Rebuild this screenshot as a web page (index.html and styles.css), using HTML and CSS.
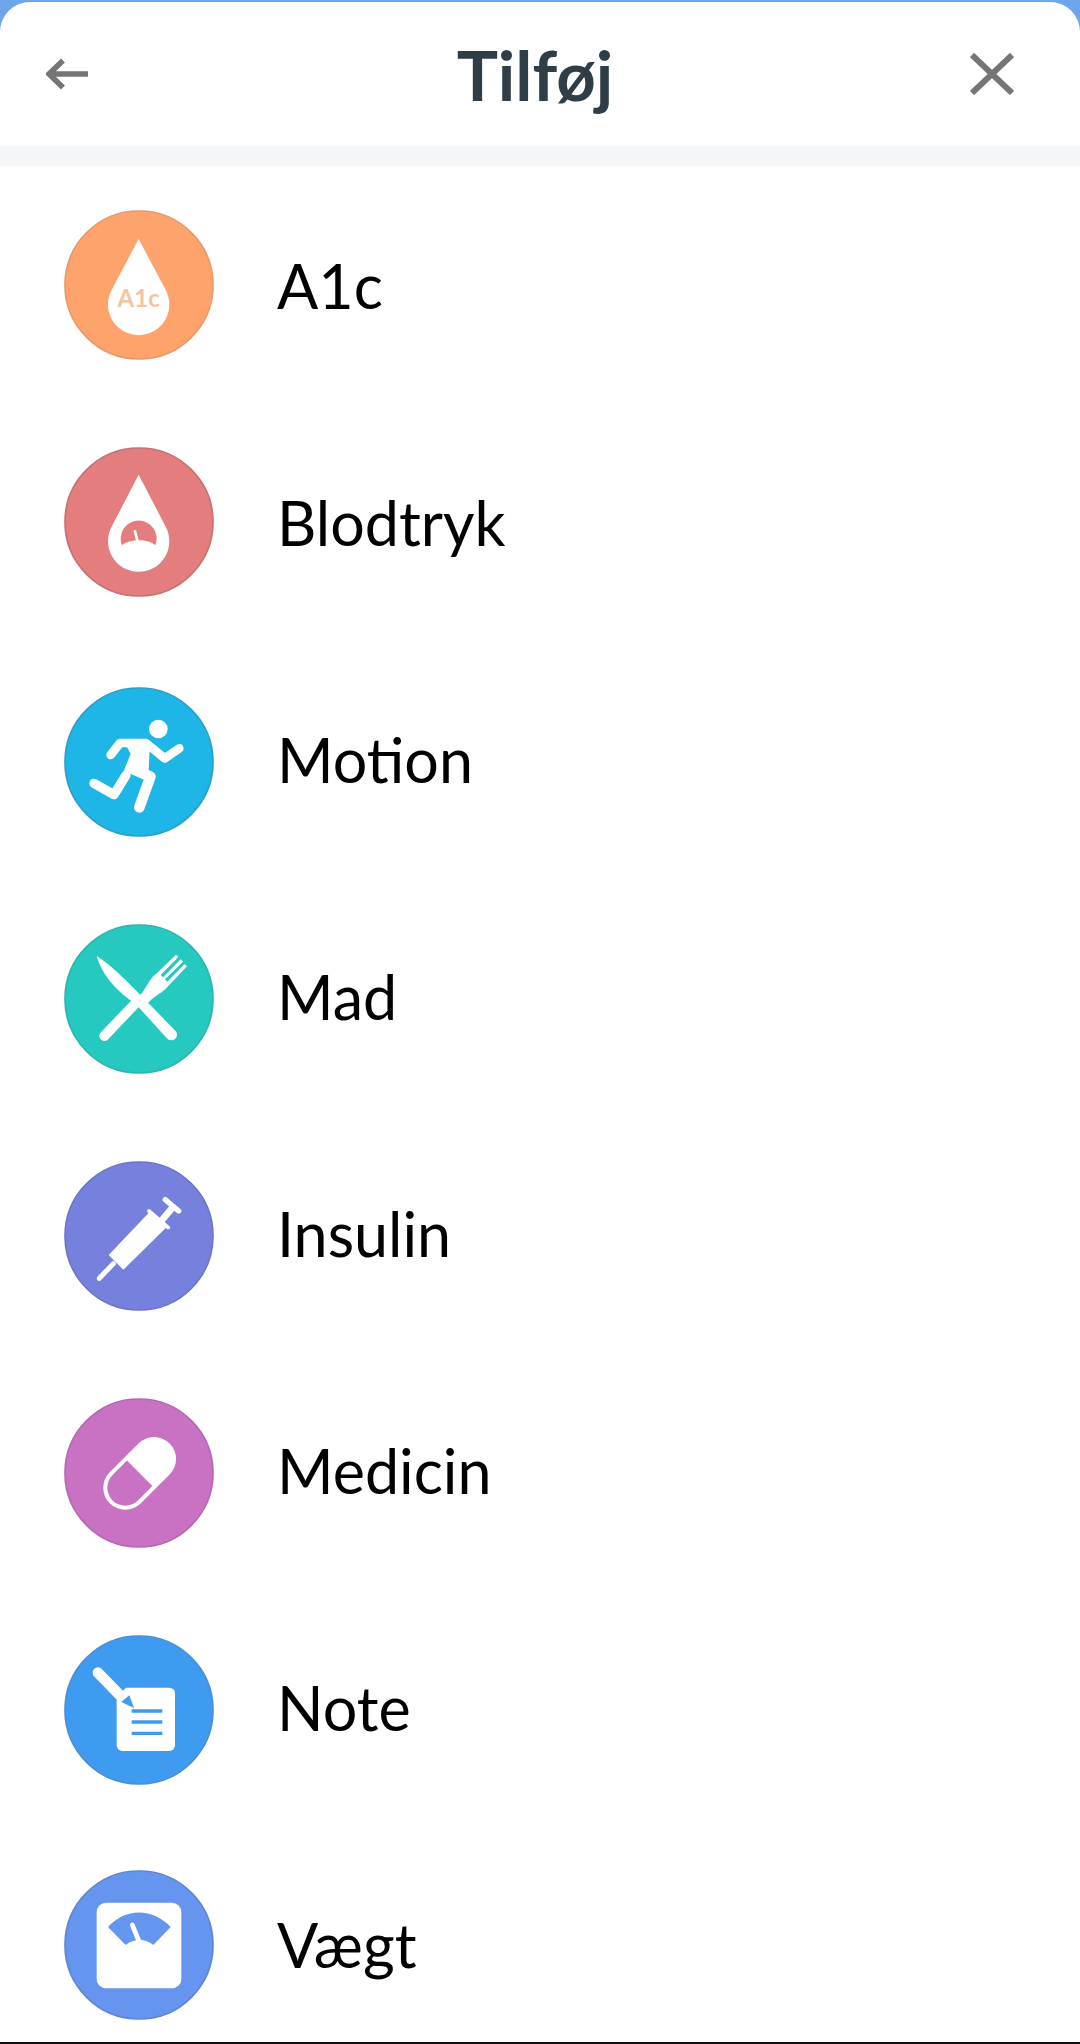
FILE: index.html
```html
<!DOCTYPE html>
<html lang="da">
<head>
    <meta charset="UTF-8">
    <meta name="viewport" content="width=device-width, initial-scale=1.0">
    <title>Tilføj</title>
    <link rel="stylesheet" href="styles.css">
</head>
<body>
    <div class="sheet">
        <!-- header -->
        <header class="top-bar">
            <svg class="back-icon" viewBox="0 0 44 32"><path d="M42 16H4M17 2.500 3 16l14 13.500"/></svg>
            <h1 class="title">Tilføj</h1>
            <svg class="close-icon" viewBox="0 0 44 42"><path d="M2 2l40 38M42 2 2 40"/></svg>
        </header>
        <div class="divider"></div>

        <!-- list -->
        <ul class="add-list">
            <li class="add-row">
                <svg class="add-icon" viewBox="39 27 456 456">
                    <circle class="disc disc-a1c" cx="267" cy="255" r="222"/>
                    <path class="white" d="M266 117 186 268A92 92 0 1 0 346 268Z"/>
                    <text class="drop-text" x="266" y="321">A1c</text>
                </svg>
                <span class="add-label">A1c</span>
            </li>
            <li class="add-row">
                <svg class="add-icon" viewBox="39 34 456 456">
                    <circle class="disc disc-pressure" cx="267" cy="262" r="222"/>
                    <path class="white" d="M266 120 186 274A92 92 0 1 0 346 274Z"/>
                    <path class="fill-pressure" d="M216 332A54 54 0 1 1 316 332C295 312 240 312 216 332Z"/>
                    <path class="line-white" stroke-width="8" d="M255 290l8 30"/>
                </svg>
                <span class="add-label">Blodtryk</span>
            </li>
            <li class="add-row">
                <svg class="add-icon" viewBox="39 37 456 456">
                    <circle class="disc disc-motion" cx="267" cy="265" r="222"/>
                    <circle class="white" cx="325" cy="166" r="28"/>
                    <path class="line-white" stroke-width="26" d="M182 244l28-36h78l56 46 44-30"/>
                    <path class="white" d="M222 205H300L296 292 218 300 242 240Z"/>
                    <path class="line-white" stroke-width="32" d="M245 285l56 24-33 92"/>
                    <path class="line-white" stroke-width="28" d="M228 305l-36 58-60-34"/>
                </svg>
                <span class="add-label">Motion</span>
            </li>
            <li class="add-row">
                <svg class="add-icon" viewBox="39 37 456 456">
                    <circle class="disc disc-food" cx="267" cy="265" r="222"/>
                    <path class="white" d="M140 136C180 160 230 210 290 272L376 360A16 16 0 0 1 352 384L268 292 240 268C195 235 155 190 140 136Z"/>
                    <path class="line-white" stroke-width="30" d="M163 376 262 272"/>
                    <path class="white" d="M248 268C285 255 290 210 318 190L378 132 385 139 332 193 339 200 392 146 399 153 345 206 352 213 404 160 411 167 357 224C335 250 310 255 285 288Z"/>
                </svg>
                <span class="add-label">Mad</span>
            </li>
            <li class="add-row">
                <svg class="add-icon" viewBox="39 37 456 456">
                    <circle class="disc disc-insulin" cx="267" cy="265" r="222"/>
                    <path class="line-white" stroke-width="15" d="M148 392l42-44"/>
                    <path class="white" d="M176 322 298 194 348 240 220 366Z"/>
                    <path class="line-white" stroke-width="11" d="M297 190 355 240"/>
                    <path class="line-white" stroke-width="20" d="M332 222l32-38"/>
                    <path class="line-white" stroke-width="16" d="M346 156l40 34"/>
                </svg>
                <span class="add-label">Insulin</span>
            </li>
            <li class="add-row">
                <svg class="add-icon" viewBox="39 34 456 456">
                    <circle class="disc disc-medicine" cx="267" cy="262" r="222"/>
                    <g transform="translate(269 263) rotate(-45)">
                        <rect class="white" x="-127" y="-66" width="254" height="132" rx="66"/>
                        <path class="fill-medicine" d="M0 -54H-61A54 54 0 0 0 -61 54H0Z"/>
                    </g>
                </svg>
                <span class="add-label">Medicin</span>
            </li>
            <li class="add-row">
                <svg class="add-icon" viewBox="39 34 456 456">
                    <circle class="disc disc-note" cx="267" cy="262" r="222"/>
                    <path class="white" d="M228 195H358A17 17 0 0 1 375 212V368A17 17 0 0 1 358 385H217A17 17 0 0 1 200 368V222Z"/>
                    <path class="line-white" stroke-width="32" d="M144 150l70 72"/>
                    <path class="fill-note" d="M214 238 238 218 252 256Z"/>
                    <path class="line-note" d="M245 265h92M245 298h92M245 332h92"/>
                </svg>
                <span class="add-label">Note</span>
            </li>
            <li class="add-row">
                <svg class="add-icon" viewBox="37 24 456 456">
                    <circle class="disc disc-weight" cx="265" cy="252" r="222"/>
                    <rect class="white" x="138" y="125" width="254" height="257" rx="28"/>
                    <path class="fill-weight" d="M172 198C225 140 305 140 360 198L308 252C285 232 250 232 225 252Z"/>
                    <path class="line-white" stroke-width="14" d="M245 192l22 54"/>
                </svg>
                <span class="add-label">Vægt</span>
            </li>
        </ul>
    </div>
</body>
</html>
```

FILE: styles.css
```css
/* page */
* {
    margin: 0;
    padding: 0;
    box-sizing: border-box;
}

body {
    height: 2044px;
    overflow: hidden;
    background: #6ea6ee;
    font-family: Lato, "Liberation Sans", sans-serif;
    padding-top: 2px;
}

.sheet {
    height: 2042px;
    background: #ffffff;
    border-radius: 30px 30px 0 0;
    overflow: hidden;
    border-bottom: 2px solid #111111;
}

/* header */
.top-bar {
    height: 144px;
    display: grid;
    grid-template-columns: 1fr auto 1fr;
    align-items: center;
    padding: 0 56px 0 46px;
}

.back-icon {
    width: 44px;
    height: 32px;
    fill: none;
    stroke: #757575;
    stroke-width: 5.500;
}

.close-icon {
    width: 44px;
    height: 42px;
    justify-self: end;
    margin-right: 10px;
    fill: none;
    stroke: #757575;
    stroke-width: 6;
}

.title {
    font-size: 69px;
    font-weight: 700;
    line-height: 1;
    color: #2f3e46;
}

.divider {
    height: 20px;
    background: #f5f6f8;
}

/* list */
.add-list {
    list-style: none;
}

.add-row {
    height: 237px;
    display: flex;
    align-items: center;
    gap: 62px;
    padding-left: 63px;
}

.add-icon {
    width: 152px;
    height: 152px;
    flex-shrink: 0;
}

/* the middle icons sit a few px low in the row */
.add-row:nth-child(n+3) .add-icon {
    margin-top: 6px;
}

.add-row:last-child .add-icon {
    margin-top: 2px;
}

.add-label {
    font-size: 61px;
    padding-top: 2px;
    color: #000000;
    font-feature-settings: "liga" 1;
}

/* icon parts */
.disc {
    stroke-width: 5;
}

.white {
    fill: #ffffff;
}

.line-white {
    fill: none;
    stroke: #ffffff;
    stroke-linecap: round;
    stroke-linejoin: round;
}

.drop-text {
    font-family: Lato, sans-serif;
    font-size: 72px;
    font-weight: 700;
    text-anchor: middle;
    fill: #f4c4a0;
}

.disc-a1c { fill: #ffa36c; stroke: #e8986a; }
.disc-pressure { fill: #e37d7e; stroke: #c87074; }
.disc-motion { fill: #1eb5e7; stroke: #2a9fcb; }
.disc-food { fill: #25c9bf; stroke: #2db5ad; }
.disc-insulin { fill: #7681de; stroke: #6c75c8; }
.disc-medicine { fill: #c971c3; stroke: #b568b0; }
.disc-note { fill: #3f9bef; stroke: #4a8ed6; }
.disc-weight { fill: #6595ee; stroke: #5f86d2; }

.fill-pressure { fill: #e37d7e; }
.fill-medicine { fill: #c971c3; }
.fill-note { fill: #3f9bef; }
.fill-weight { fill: #6595ee; }

.line-note {
    fill: none;
    stroke: #3f9bef;
    stroke-width: 10;
}
```
